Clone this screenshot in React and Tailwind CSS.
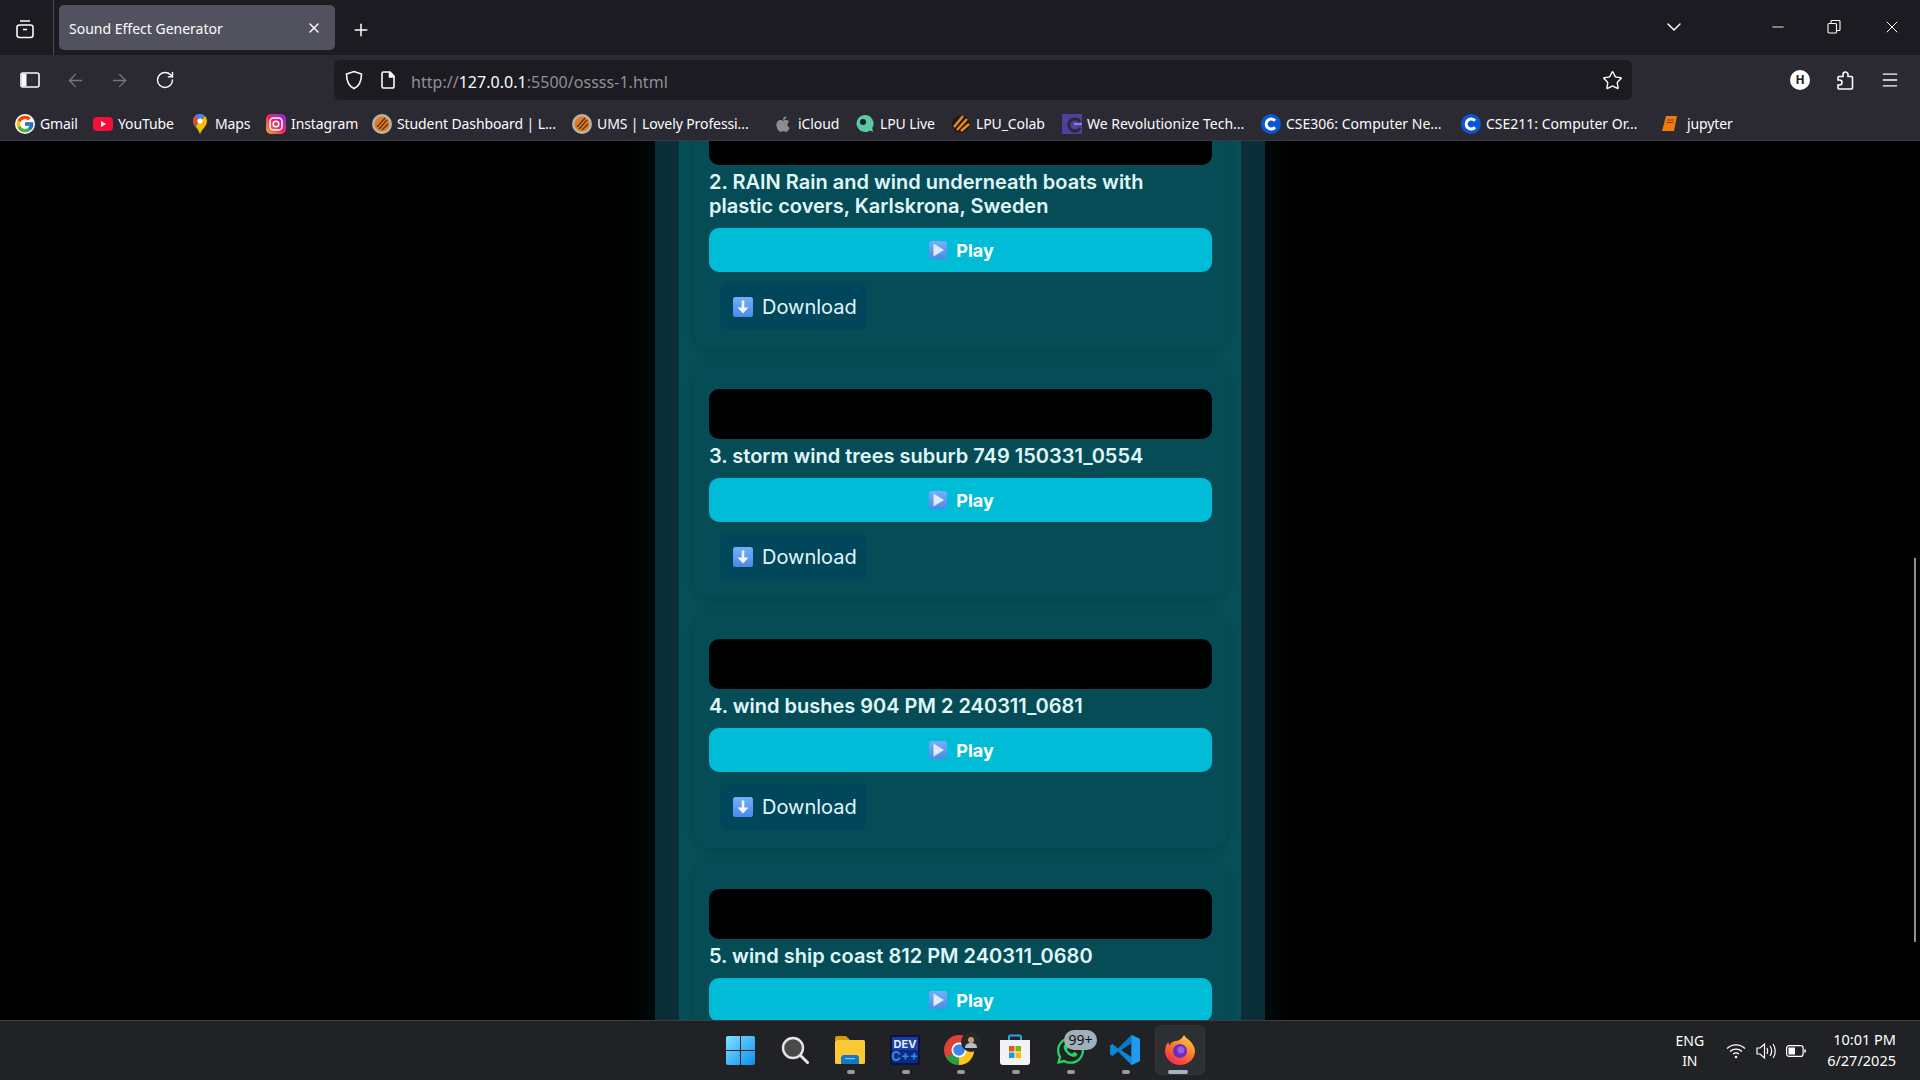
import React from "react";
import { ArrowLeft, ArrowRight, RotateCw, Star, Menu, X, Plus, ChevronDown, Minus } from "lucide-react";
import { FcGoogle } from "react-icons/fc";
import { FaApple, FaWhatsapp } from "react-icons/fa";

const ui = { fontFamily: '"Noto Sans", "Open Sans", sans-serif' };
const inter = { fontFamily: 'Inter, "Noto Sans", sans-serif' };

function Lpu({ s = 20 }) {
  return (
    <svg width={s} height={s} viewBox="0 0 20 20">
      <circle cx="10" cy="10" r="10" fill="#b9b4ab" />
      <circle cx="10" cy="10" r="7.5" fill="#e07b22" />
      <path d="M5 13L13 4M7 15L15 6M10 16L16 10" stroke="#5b3413" strokeWidth="1.3" />
    </svg>
  );
}
function CIcon() {
  return (
    <svg width="20" height="20" viewBox="0 0 20 20">
      <circle cx="10" cy="10" r="10" fill="#0a56d6" />
      <path d="M14 6.8A5 5 0 1 0 14 13.2" fill="none" stroke="#fff" strokeWidth="3" />
    </svg>
  );
}
const bookmarks = [
  { w: "w-[78px] tracking-[-0.1px]", label: "Gmail", icon: <FcGoogle size={20} className="rounded-full bg-white" /> },
  { w: "w-[97px] tracking-[-0.1px]", label: "YouTube", icon: (
    <svg width="20" height="20" viewBox="0 0 20 20"><rect y="3" width="20" height="14" rx="4" fill="#f50f38" /><path d="M8 7l5 3-5 3z" fill="#fff" /></svg>
  ) },
  { w: "w-[76px] tracking-[-0.1px]", label: "Maps", icon: (
    <svg width="14" height="20" viewBox="0 0 14 20"><path d="M7 20C5 15 0 12 0 7a7 7 0 0 1 7-7z" fill="#34a853" /><path d="M7 20c2-5 7-8 7-13 0-2-1-4-2-5L3 12c2 2 3 5 4 8z" fill="#fbbc04" /><path d="M2 2a7 7 0 0 1 10 0L7 7z" fill="#4285f4" /><path d="M0 7c0-2 1-4 2-5l5 5-4 5C1 10 0 9 0 7z" fill="#ea4335" /><circle cx="7" cy="7" r="2.6" fill="#fff" /></svg>
  ) },
  { w: "w-[106px] tracking-[-0.1px]", label: "Instagram", icon: (
    <svg width="20" height="20" viewBox="0 0 20 20"><defs><linearGradient id="ig" x1="0" y1="1" x2="1" y2="0"><stop offset="0" stopColor="#fdb022" /><stop offset=".5" stopColor="#f0246e" /><stop offset="1" stopColor="#7a2cf0" /></linearGradient></defs><rect width="20" height="20" rx="5" fill="url(#ig)" /><rect x="4" y="4" width="12" height="12" rx="3.5" fill="none" stroke="#fff" strokeWidth="1.5" /><circle cx="10" cy="10" r="2.8" fill="none" stroke="#fff" strokeWidth="1.5" /></svg>
  ) },
  { w: "w-[200px] tracking-[-0.1px]", label: "Student Dashboard | L...", icon: <Lpu /> },
  { w: "w-[201px] tracking-[-0.1px]", label: "UMS | Lovely Professi...", icon: <Lpu /> },
  { w: "w-[82px] tracking-[-0.1px]", label: "iCloud", icon: <span className="flex w-[20px] justify-center"><FaApple size={18} color="#8d8d8f" /></span> },
  { w: "w-[96px] tracking-[-0.1px]", label: "LPU Live", icon: (
    <svg width="20" height="20" viewBox="0 0 20 20"><path d="M10 1a8.5 8.5 0 1 0 5 15.4L18 18l-.8-4A8.5 8.5 0 0 0 10 1z" fill="#5cc9a0" /><circle cx="8" cy="8" r="3" fill="#123" /></svg>
  ) },
  { w: "w-[111px] tracking-[-0.1px]", label: "LPU_Colab", icon: (
    <svg width="20" height="20" viewBox="0 0 20 20"><circle cx="10" cy="10" r="9" fill="#1c1b22" /><path d="M3 13L12 2M6 16L16 5M10 17L18 10" stroke="#f28a0c" strokeWidth="2.4" /></svg>
  ) },
  { w: "w-[199px]", label: "We Revolutionize Tech...", icon: (
    <svg width="20" height="20" viewBox="0 0 20 20"><rect width="20" height="20" fill="#4f3f9e" /><path d="M18 14a6 6 0 1 1 0-6" fill="none" stroke="#2b2a33" strokeWidth="3" /><rect x="12" y="9" width="8" height="2" fill="#8d80d8" /></svg>
  ) },
  { w: "w-[200px]", label: "CSE306: Computer Ne...", icon: <CIcon /> },
  { w: "w-[201px]", label: "CSE211: Computer Or...", icon: <CIcon /> },
  { w: "w-auto tracking-[-0.1px]", label: "jupyter", icon: (
    <svg width="20" height="20" viewBox="2 0 20 20"><path d="M6 2h11l-3 15H2z" fill="#ef7d08" /><path d="M7 6h7M6.5 8.5h7" stroke="#7a4205" strokeWidth="1" /></svg>
  ) },
];

function EmojiDefs({ id }) {
  return (
    <defs>
      <linearGradient id={id} x1="0" y1="0" x2="0" y2="1">
        <stop offset="0" stopColor="#74b0f8" />
        <stop offset="1" stopColor="#4a8ae8" />
      </linearGradient>
    </defs>
  );
}
function PlayEmoji({ id }) {
  return (
    <svg width="18" height="18" viewBox="0 0 18 18" className="shrink-0">
      <EmojiDefs id={id} />
      <rect width="18" height="18" rx="2.5" fill={`url(#${id})`} />
      <path d="M4.500 2.500L15 9 4.500 15.500z" fill="#dfeaff" />
    </svg>
  );
}
function DownEmoji({ id }) {
  return (
    <svg width="20" height="20" viewBox="0 0 20 20" className="shrink-0">
      <EmojiDefs id={id} />
      <rect width="20" height="20" rx="2.5" fill={`url(#${id})`} />
      <path d="M10 3.500v9" stroke="#f4f7ff" strokeWidth="2.6" />
      <path d="M4.500 10.500h11L10 16.500z" fill="#f4f7ff" />
    </svg>
  );
}

function Card({ n, title, download = true }) {
  return (
    <div className="mb-[15px] rounded-2xl bg-[#054c56] px-4 pb-[18px] pt-[26px] shadow-[0_2px_14px_rgba(0,0,0,0.2)]">
      <div className="h-[50px] rounded-[10px] bg-black" />
      <h3 className="mt-[5px] text-[20px] font-semibold leading-[24px] text-[#e0f7fa]">{title}</h3>
      <button className="mt-[10px] flex h-[44px] w-full items-center justify-center gap-[9px] rounded-[10px] bg-[#00bcd6] pl-[2px] text-[18px] font-bold text-white">
        <PlayEmoji id={`p${n}`} />
        <span>Play</span>
      </button>
      {download && (
        <div className="ml-[11px] mt-[11px] flex h-[47px] w-[147px] items-center gap-[9px] rounded-lg bg-[#01475c] pl-[13px] text-[20px] text-[#e0f7fa]">
          <DownEmoji id={`d${n}`} />
          <span>Download</span>
        </div>
      )}
    </div>
  );
}

function TaskIcon({ children, active, dot = true }) {
  return (
    <div className="relative flex h-[50px] w-[55px] items-center justify-center">
      {active && <div className="absolute left-[2px] top-0 h-[50px] w-[50px] rounded-md border border-[#35373a] bg-[#2d2f33]" />}
      <div className="relative flex h-[32px] w-[32px] items-center justify-center">{children}</div>
      {dot && !active && <div className="absolute bottom-[1px] left-[24px] h-[4px] w-[8px] rounded-full bg-[#9a9a9a]" />}
      {active && <div className="absolute bottom-[1px] left-[15px] h-[4px] w-[20px] rounded-full bg-[#a3b4c0]" />}
    </div>
  );
}

export default function App() {
  return (
    <div className="flex h-[1080px] w-[1920px] flex-col overflow-hidden bg-black" style={ui}>
      {/* Tab strip */}
      <div className="flex h-[55px] shrink-0 bg-[#1c1b22] text-white">
        <div className="flex h-[55px] w-[54px] items-center justify-center border-r border-[#4a4a52] pr-[4px] pt-[3px]">
          <svg width="20" height="20" viewBox="0 0 20 20" fill="none" stroke="#fbfbfe" strokeWidth="1.6"><rect x="2" y="6" width="16" height="12.5" rx="2.5" /><path d="M5 2h10M8 10.5h4" /></svg>
        </div>
        <div className="ml-[5px] mt-[5px] flex h-[45px] w-[276px] items-center justify-between rounded-[5px] bg-[#52525e] pl-[10px] pr-[13px] pt-[1px]">
          <span className="text-[14px] text-[#fbfbfe]">Sound Effect Generator</span>
          <X size={16} strokeWidth={2} color="#fbfbfe" />
        </div>
        <div className="ml-[16px] flex items-center pt-[4px]"><Plus size={20} strokeWidth={1.8} color="#fbfbfe" /></div>
        <div className="ml-auto flex items-center pb-[2px] text-[#fbfbfe]">
          <ChevronDown size={24} strokeWidth={1.5} />
          <div className="ml-[83px] w-[58px]"><Minus size={18} strokeWidth={1.2} /></div>
          <div className="w-[55px]">
            <svg width="14" height="14" viewBox="0 0 14 14" fill="none" stroke="#fbfbfe" strokeWidth="1.1"><rect x="1" y="3.5" width="8.5" height="9.5" rx="1" /><path d="M4 3.5V1.5a1 1 0 0 1 1-1h7a1 1 0 0 1 1 1v8a1 1 0 0 1-1 1H9.5" /></svg>
          </div>
          <div className="w-[38px]"><X size={20} strokeWidth={1.2} /></div>
        </div>
      </div>

      {/* Nav bar */}
      <div className="flex h-[50px] shrink-0 items-start bg-[#2b2a33] text-[#fbfbfe]">
        <div className="flex h-[50px] w-[334px] items-center">
          <div className="ml-[20px] w-[45px]">
            <svg width="20" height="20" viewBox="0 0 20 20" fill="none" stroke="#fbfbfe" strokeWidth="1.6"><rect x="1" y="3" width="18" height="14" rx="2" /><rect x="2" y="4" width="4.5" height="12" fill="#fbfbfe" stroke="none" /></svg>
          </div>
          <div className="w-[44px]"><ArrowLeft size={21} strokeWidth={1.6} color="#77767e" /></div>
          <div className="w-[46px]"><ArrowRight size={21} strokeWidth={1.6} color="#77767e" /></div>
          <RotateCw size={20} strokeWidth={1.7} />
        </div>
        <div className="mt-[5px] flex h-10 w-[1298px] items-center rounded-md bg-[#1c1b22]">
          <svg width="20" height="20" viewBox="0 0 20 20" fill="none" stroke="#fbfbfe" strokeWidth="1.6" className="ml-[10px]"><path d="M10 1.5l7.5 2.5c0 8-2 12-7.5 14.5C4.5 16 2.5 12 2.5 4z" /></svg>
          <svg width="16" height="20" viewBox="0 0 16 20" fill="none" stroke="#fbfbfe" strokeWidth="1.6" className="ml-[16px]"><path d="M2 3.5A1.5 1.5 0 0 1 3.5 2H10l4 4v10.500a1.500 1.500 0 0 1-1.500 1.500h-9A1.500 1.500 0 0 1 2 16.500z" /><path d="M9.500 2v5h5" fill="#fbfbfe" /></svg>
          <span className="ml-[15px] pt-[3px] text-[16px] tracking-[0.03px] text-[#8f8f95]">http://<span className="text-[#fbfbfe]">127.0.0.1</span>:5500/ossss-1.html</span>
          <Star size={21} strokeWidth={1.6} className="ml-auto mr-[9px]" />
        </div>
        <div className="flex h-[50px] flex-1 items-center">
          <div className="ml-[158px] flex h-5 w-5 items-center justify-center rounded-full bg-white text-[12px] font-bold text-[#1c1b22]">H</div>
          <svg width="21" height="21" viewBox="0 0 21 21" fill="none" stroke="#fbfbfe" strokeWidth="1.6" className="ml-[25px]"><path d="M8 6.500V4.500a2.500 2.500 0 0 1 5 0v2h3.500a1 1 0 0 1 1 1V18a1 1 0 0 1-1 1H4a1 1 0 0 1-1-1v-3h1.500a2.500 2.500 0 0 0 0-5H3V7.500a1 1 0 0 1 1-1z" /></svg>
          <Menu size={20} strokeWidth={1.6} className="ml-[24px]" />
        </div>
      </div>

      {/* Bookmarks */}
      <div className="flex h-[36px] shrink-0 items-center border-b border-[#3c3b44] bg-[#2b2a33] pl-[15px] pt-[2px] text-[14px] text-[#fbfbfe]">
        {bookmarks.map((b) => (
          <div key={b.label} className={`flex items-center gap-[5px] whitespace-nowrap ${b.w}`}>
            <span className="flex h-5 w-5 shrink-0 items-center justify-center">{b.icon}</span>
            <span>{b.label}</span>
          </div>
        ))}
      </div>

      {/* Page */}
      <div className="relative min-h-0 flex-1 overflow-hidden bg-black" style={inter}>
        <div className="mx-auto -mt-[52px] w-[610px] bg-[#0a2f38] px-[24px] shadow-[0_0_30px_rgba(0,188,212,0.12)]">
          <div className="bg-[#07505a] pb-[100px] pl-[14px] pr-[13px]">
            <Card n="2" title="2. RAIN Rain and wind underneath boats with plastic covers, Karlskrona, Sweden" />
            <Card n="3" title="3. storm wind trees suburb 749 150331_0554" />
            <Card n="4" title="4. wind bushes 904 PM 2 240311_0681" />
            <Card n="5" title="5. wind ship coast 812 PM 240311_0680" download={false} />
          </div>
        </div>
        <div className="absolute right-[4px] top-[417px] h-[384px] w-[2px] bg-[#8f8f8f]" />
      </div>

      {/* Taskbar */}
      <div className="flex h-[60px] shrink-0 items-center border-t border-[#3b3c3e] bg-[#202225] text-white">
        <div className="flex-1" />
        <div className="-mt-[1px] flex items-center">
          <TaskIcon dot={false}>
            <svg width="29" height="29" viewBox="0 0 29 29"><defs><linearGradient id="win" x1="0" y1="0" x2="1" y2="1"><stop offset="0" stopColor="#7fe3ff" /><stop offset="1" stopColor="#0b8ff0" /></linearGradient></defs><path d="M0 2a2 2 0 0 1 2-2h12v14H0zM15 0h12a2 2 0 0 1 2 2v12H15zM0 15h14v14H2a2 2 0 0 1-2-2zM15 15h14v12a2 2 0 0 1-2 2H15z" fill="url(#win)" /></svg>
          </TaskIcon>
          <TaskIcon dot={false}>
            <svg width="28" height="28" viewBox="0 0 28 28" fill="none"><circle cx="12" cy="12" r="10" fill="#4a4a4d" stroke="#e6e6e6" strokeWidth="2.4" /><path d="M19.500 19.500l7 7" stroke="#e6e6e6" strokeWidth="3" strokeLinecap="round" /></svg>
          </TaskIcon>
          <TaskIcon>
            <svg width="30" height="28" viewBox="0 0 30 28"><path d="M0 2a2 2 0 0 1 2-2h9l4 4H0z" fill="#d99a08" /><rect y="4" width="30" height="24" rx="1.500" fill="#fcc934" /><path d="M6 22a3 3 0 0 1 3-3h12a3 3 0 0 1 3 3v6H6z" fill="#1277c9" /><rect x="10" y="22" width="10" height="1.200" fill="#7fc4ef" /></svg>
          </TaskIcon>
          <TaskIcon>
            <svg width="30" height="30" viewBox="0 0 30 30"><rect width="30" height="30" rx="2" fill="#10123e" /><rect x="2" y="2" width="26" height="13" fill="#1a3fa6" /><rect x="2" y="15" width="26" height="13" fill="#0b2a84" /><text x="15" y="13" textAnchor="middle" fontSize="11" fontWeight="700" fill="#e8eef8" fontFamily="Inter, sans-serif">DEV</text><text x="15" y="26" textAnchor="middle" fontSize="13" fontWeight="700" fill="#2f8fe0" fontFamily="Inter, sans-serif">C++</text></svg>
          </TaskIcon>
          <TaskIcon>
            <svg width="32" height="32" viewBox="0 0 32 32" className="overflow-visible"><circle cx="15" cy="16" r="15" fill="#dd4436" /><path d="M15 16L2 23.500A15 15 0 0 0 15 31z" fill="#2a9d49" /><path d="M15 16v15A15 15 0 0 0 28 8.500H15z" fill="#f8c61c" /><circle cx="15" cy="16" r="7.500" fill="#fff" /><circle cx="15" cy="16" r="5.800" fill="#3d84ee" /><circle cx="27" cy="8" r="10" fill="#26282a" /><circle cx="27" cy="6" r="3" fill="#c59a80" /><path d="M21 14c0-4 3-5 6-5s6 1 6 5z" fill="#b9c0c8" /></svg>
          </TaskIcon>
          <TaskIcon>
            <svg width="30" height="32" viewBox="0 0 30 32"><path d="M9 6V3a1.500 1.500 0 0 1 1.500-1.500h9A1.500 1.500 0 0 1 21 3v3" fill="none" stroke="#22a7e8" strokeWidth="2" /><path d="M0 6h30v22a3 3 0 0 1-3 3H3a3 3 0 0 1-3-3z" fill="#f3f3f3" /><rect x="9" y="12" width="5.500" height="5.500" fill="#e8532b" /><rect x="15.500" y="12" width="5.500" height="5.500" fill="#7fb800" /><rect x="9" y="18.500" width="5.500" height="5.500" fill="#1a9be8" /><rect x="15.500" y="18.500" width="5.500" height="5.500" fill="#fbb900" /></svg>
          </TaskIcon>
          <TaskIcon>
            <FaWhatsapp size={31} color="#25d366" />
            <div className="absolute -right-[11px] -top-[4px] flex h-[20px] w-[33px] items-center justify-center rounded-full bg-[#9fb0bb] text-[14px] leading-none text-[#111]">99+</div>
          </TaskIcon>
          <TaskIcon>
            <svg width="30" height="30" viewBox="0 0 30 30"><path d="M21.500 0L30 4v22l-8.500 4L8 16.500 2.500 21 0 19.500V10.500L2.500 9 8 13.500z" fill="#0a86d8" /><path d="M21.500 8L11 15l10.500 7z" fill="#202225" /><path d="M21.500 0L30 4v22l-8.500 4z" fill="#1f9cf0" /><path d="M21.500 0v8L11 15 8 13.500z" fill="#0a78c4" /></svg>
          </TaskIcon>
          <TaskIcon active dot={false}>
            <svg width="30" height="30" viewBox="0 0 30 30"><defs><linearGradient id="ff" x1="0.800" y1="0" x2="0.200" y2="1"><stop offset="0" stopColor="#ffd43a" /><stop offset=".45" stopColor="#ff7a2c" /><stop offset="1" stopColor="#f0264c" /></linearGradient></defs><path d="M19 0c2 3 3 3 6 6 4 4 5 8 5 10a15 14 0 1 1-29-5c.5-2 1.500-3 2.500-4 0 2 .5 3 1 3.500C6 7 9 6 12 6c2-1 5-2 7-6z" fill="url(#ff)" /><circle cx="15" cy="16" r="7" fill="#6b2cc4" /><circle cx="16" cy="15" r="3.500" fill="#9a5ce0" /></svg>
          </TaskIcon>
        </div>
        <div className="flex flex-1 justify-end">
          <div className="mr-[24px] flex items-center">
            <div className="mr-[22px] text-center text-[14px] leading-[20px]">ENG<br />IN</div>
            <svg width="20" height="16" viewBox="0 0 20 16" fill="none" stroke="#fff" strokeWidth="1.300" className="mr-[10px]"><path d="M1 5.500a13 13 0 0 1 18 0M4 8.500a9 9 0 0 1 12 0M7 11a5 5 0 0 1 6 0" /><circle cx="10" cy="14" r="1.300" fill="#fff" stroke="none" /></svg>
            <svg width="20" height="18" viewBox="0 0 20 18" fill="none" stroke="#fff" strokeWidth="1.200" className="mr-[10px]"><path d="M1 6h3l4.500-4v14L4 12H1zM11 6c1 2 1 4 0 6M14 4c2 3 2 7 0 10M17 2c3 4 3 10 0 14" /></svg>
            <svg width="20" height="12" viewBox="0 0 20 12" fill="none" stroke="#fff" strokeWidth="1.200" className="mr-[21px]"><rect x=".6" y=".6" width="16.500" height="10.800" rx="2.500" /><rect x="2.500" y="2.500" width="6.500" height="7" fill="#fff" stroke="none" /><path d="M19 4.500v3" strokeWidth="1.600" /></svg>
            <div className="pb-[2px] text-right text-[14.500px] leading-[21px]">10:01 PM<br />6/27/2025</div>
          </div>
        </div>
      </div>
    </div>
  );
}
